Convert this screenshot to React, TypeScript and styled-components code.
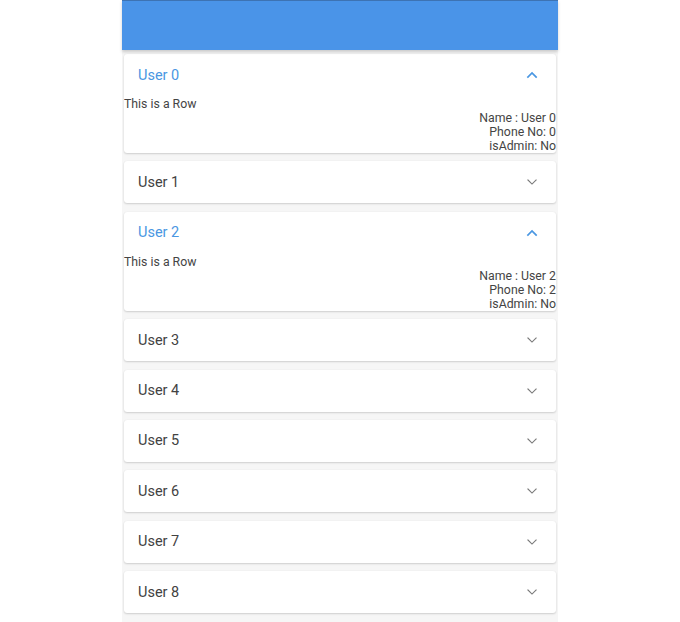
import React from "react";
import styled, { createGlobalStyle } from "styled-components";

const Global = createGlobalStyle`
  html, body { margin: 0; padding: 0; background: #ffffff; }
  body { font-family: Roboto, "Noto Sans", Arial, sans-serif; }
`;

const Page = styled.div`
  width: 436px;
  min-height: 622px;
  margin: 0 auto;
  background: #f6f6f6;
  display: flex;
  flex-direction: column;
`;

const AppBar = styled.header`
  height: 49px;
  background: #4a94e8;
  border-top: 1px solid #3d73b3;
  box-shadow: 0 2px 3px rgba(0, 0, 0, 0.18);
  position: relative;
  z-index: 1;
`;

const List = styled.div`
  display: flex;
  flex-direction: column;
  gap: 8.4px;
  padding: 4px 2px 8px;
`;

const Card = styled.div`
  background: #ffffff;
  border-radius: 3px;
  box-shadow: 0 1px 2px rgba(0, 0, 0, 0.16), 0 0 1px rgba(0, 0, 0, 0.08);
  overflow: hidden;
`;

const CardHeader = styled.div<{ $open: boolean }>`
  height: 42px;
  display: flex;
  align-items: center;
  justify-content: space-between;
  padding: 0 17px 0 14px;
  font-size: 14.5px;
  color: ${(p) => (p.$open ? "#4a97e2" : "#424242")};
`;

const Chevron = styled.svg<{ $open: boolean }>`
  width: 14px;
  height: 14px;
  color: ${(p) => (p.$open ? "#4a97e2" : "#7a7a7a")};
`;

const Body = styled.div`
  padding-top: 1px;
  font-size: 12.3px;
  line-height: 14px;
  color: #444444;
`;

const RowText = styled.div`
  text-align: left;
`;

const Details = styled.div`
  display: flex;
  flex-direction: column;
  align-items: flex-end;
`;

const users = Array.from({ length: 9 }, (_, i) => i);
const openSet = new Set([0, 2]);

export default function App() {
  return (
    <>
      <Global />
      <Page>
        <AppBar />
        <List>
          {users.map((i) => {
            const open = openSet.has(i);
            return (
              <Card key={i}>
                <CardHeader $open={open}>
                  <span>User {i}</span>
                  <Chevron $open={open} viewBox="0 0 24 24" fill="none">
                    <path
                      d={open ? "M5 15.5l7-7 7 7" : "M5 8.5l7 7 7-7"}
                      stroke="currentColor"
                      strokeWidth={open ? 3 : 2}
                      strokeLinecap="square"
                    />
                  </Chevron>
                </CardHeader>
                {open && (
                  <Body>
                    <RowText>This is a Row</RowText>
                    <Details>
                      <span>Name : User {i}</span>
                      <span>Phone No: {i}</span>
                      <span>isAdmin: No</span>
                    </Details>
                  </Body>
                )}
              </Card>
            );
          })}
        </List>
      </Page>
    </>
  );
}
